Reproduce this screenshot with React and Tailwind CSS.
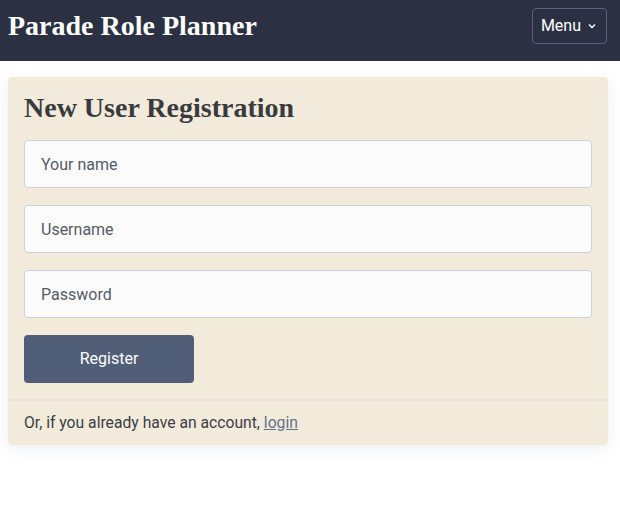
export default function App() {
  return (
    <div className="min-h-[527px] bg-white font-['Roboto',sans-serif] text-[#3a3d45]">
      <header className="flex h-[61px] items-start justify-between bg-[#2b3142] pl-2 pr-[13px] pt-2">
        <h1 className="font-['Liberation_Serif',serif] text-[28px] font-bold leading-9 text-white">
          Parade Role Planner
        </h1>
        <button className="flex h-9 items-center gap-1.5 rounded border border-[#5a6275] pl-2 pr-[9px] text-base text-white">
          Menu
          <svg width="10" height="10" viewBox="0 0 10 10" fill="none" stroke="currentColor" strokeWidth="1.4">
            <path d="M2 3.5 5 6.5 8 3.5" />
          </svg>
        </button>
      </header>

      <main className="pb-2 pl-2 pr-3 pt-4">
        <div className="rounded bg-[#f2ebdb] shadow-[0_4px_16px_rgba(30,40,80,0.07)]">
          <div className="flex flex-col gap-[17px] p-4">
            <h2 className="font-['Liberation_Serif',serif] text-[28px] font-bold leading-[30px] text-[#3a3b40]">
              New User Registration
            </h2>
            {["Your name", "Username", "Password"].map((p) => (
              <input
                key={p}
                type={p === "Password" ? "password" : "text"}
                placeholder={p}
                className="h-12 w-full rounded border border-[#c9d1e0] bg-[#fbfbfc] px-4 text-base placeholder:text-[#555c68]"
              />
            ))}
            <button className="h-12 w-[170px] rounded bg-[#515e78] text-base text-white">
              Register
            </button>
          </div>
          <div className="border-t-2 border-[#e8e3da] px-4 py-[10px] text-[15.7px]">
            Or, if you already have an account,{" "}
            <a href="#" className="text-[#66708c] underline">
              login
            </a>
          </div>
        </div>
      </main>
    </div>
  );
}
